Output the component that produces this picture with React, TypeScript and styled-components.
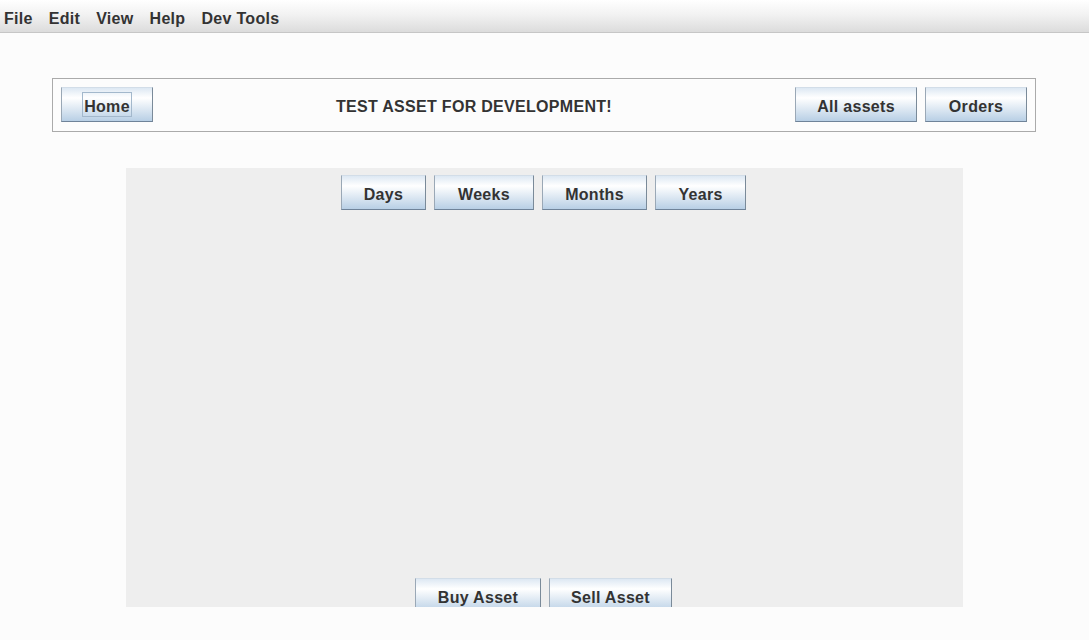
import React from "react";
import styled, { createGlobalStyle } from "styled-components";

const GlobalStyle = createGlobalStyle`
  html, body {
    margin: 0;
    padding: 0;
    background: #fcfcfc;
    font-family: "Liberation Sans", Arial, sans-serif;
  }
  * { box-sizing: border-box; }
`;

const Window = styled.div`
  width: 1089px;
  height: 640px;
  background: #fcfcfc;
  display: flex;
  flex-direction: column;
  overflow: hidden;
`;

const MenuBar = styled.div`
  height: 33px;
  flex: none;
  display: flex;
  align-items: center;
  gap: 16px;
  padding-left: 4px;
  background: linear-gradient(180deg, #ffffff 0%, #f2f2f2 45%, #dcdcdc 100%);
  border-bottom: 1px solid #c6c6c6;
`;

const MenuItem = styled.span`
  font: 700 16px "Liberation Sans", Arial, sans-serif;
  letter-spacing: 0.3px;
  color: #333333;
  line-height: 18px;
  padding-top: 6px;
  height: 24px;
`;

const Header = styled.div`
  margin: 45px 53px 0 52px;
  height: 54px;
  border: 1px solid #aaaaaa;
  padding: 8px 8px 9px 8px;
  display: flex;
  align-items: center;
`;

const Title = styled.div`
  flex: 1;
  text-align: center;
  font: 700 16px "Liberation Sans", Arial, sans-serif;
  letter-spacing: 0.3px;
  color: #333333;
  line-height: 18px;
  padding-top: 5px;
`;

const RightGroup = styled.div`
  display: flex;
  gap: 8px;
`;

const Button = styled.button<{ $w: number }>`
  width: ${(p) => p.$w}px;
  height: 35px;
  flex: none;
  margin: 0;
  padding: 0;
  display: flex;
  align-items: center;
  justify-content: center;
  background: linear-gradient(180deg, #dde8f3 0%, #ffffff 30%, #b8cfe5 100%);
  border-style: solid;
  border-width: 1px;
  border-color: #d2dde8 #7a8a99 #6f8399 #9aa8b6;
  border-radius: 0;
  color: #333333;
  font: 700 16px "Liberation Sans", Arial, sans-serif;
  letter-spacing: 0.3px;
  cursor: default;
`;

const Label = styled.span<{ $focused?: boolean }>`
  display: block;
  height: 25px;
  line-height: 18px;
  padding: 5px 1px 0 1px;
  border: 1px solid ${(p) => (p.$focused ? "#a3b8cc" : "transparent")};
  white-space: nowrap;
`;

const ChartPanel = styled.div`
  width: 837px;
  height: 439px;
  margin: 36px auto 0;
  background: #eeeeee;
  display: flex;
  flex-direction: column;
`;

const TopRow = styled.div`
  display: flex;
  justify-content: center;
  gap: 8px;
  padding: 7px 2px 0 0;
`;

const ChartArea = styled.div`
  flex: 1;
`;

const BottomRow = styled.div`
  height: 29px;
  overflow: hidden;
  display: flex;
  justify-content: center;
  align-items: flex-start;
  gap: 8px;
  padding-right: 2px;
`;

const menus = ["File", "Edit", "View", "Help", "Dev Tools"];
const periods: [string, number][] = [
  ["Days", 85],
  ["Weeks", 100],
  ["Months", 105],
  ["Years", 91],
];

export default function App() {
  return (
    <>
      <GlobalStyle />
      <Window>
        <MenuBar>
          {menus.map((m) => (
            <MenuItem key={m}>{m}</MenuItem>
          ))}
        </MenuBar>
        <Header>
          <Button $w={92}>
            <Label $focused>Home</Label>
          </Button>
          <Title>TEST ASSET FOR DEVELOPMENT!</Title>
          <RightGroup>
            <Button $w={122}>
              <Label>All assets</Label>
            </Button>
            <Button $w={102}>
              <Label>Orders</Label>
            </Button>
          </RightGroup>
        </Header>
        <ChartPanel>
          <TopRow>
            {periods.map(([p, w]) => (
              <Button key={p} $w={w}>
                <Label>{p}</Label>
              </Button>
            ))}
          </TopRow>
          <ChartArea />
          <BottomRow>
            <Button $w={126}>
              <Label>Buy Asset</Label>
            </Button>
            <Button $w={123}>
              <Label>Sell Asset</Label>
            </Button>
          </BottomRow>
        </ChartPanel>
      </Window>
    </>
  );
}
